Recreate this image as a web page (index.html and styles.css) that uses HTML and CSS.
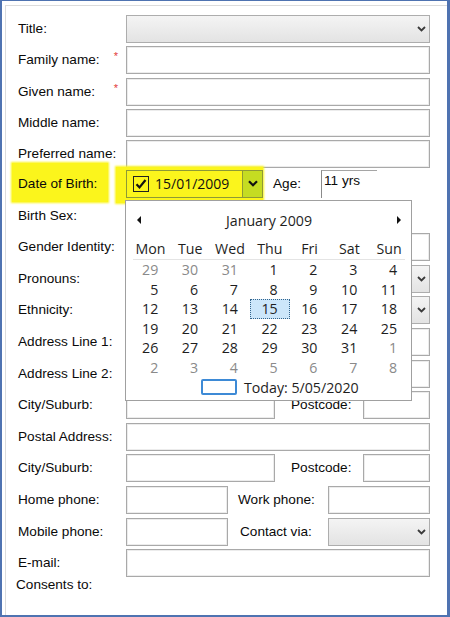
FILE: index.html
```html
<!DOCTYPE html>
<html>
<head>
<meta charset="utf-8">
<link rel="stylesheet" href="styles.css">
</head>
<body>
<div class="frame">
  <div class="panel">
    <div class="grp1">
      <div class="row"><span class="lbl">Title:</span><div class="sel f"><svg class="chev" viewBox="0 0 9 6"><path d="M1 1l3.5 3.5L8 1" fill="none" stroke="#3a3a3a" stroke-width="1.8"/></svg></div></div>
      <div class="row"><span class="lbl">Family name:<i class="req">*</i></span><div class="inp f"></div></div>
      <div class="row"><span class="lbl">Given name:<i class="req">*</i></span><div class="inp f"></div></div>
      <div class="row"><span class="lbl">Middle name:</span><div class="inp f"></div></div>
      <div class="row"><span class="lbl">Preferred name:</span><div class="inp f"></div></div>
    </div>
    <div class="row dob">
      <span class="lbl"><span class="hl">Date of Birth:</span></span>
      <div class="dpwrap">
        <div class="dp">
          <span class="cb"><svg viewBox="0 0 14 14" width="14" height="14"><path d="M2.5 7.2l3 3.2L11.5 3" fill="none" stroke="#111" stroke-width="2.2"/></svg></span>
          <span class="dtext">15/01/2009</span>
          <span class="dbtn"><svg viewBox="0 0 10 7" width="10" height="7"><path d="M1 1.2l4 4 4-4" fill="none" stroke="#111" stroke-width="2.2"/></svg></span>
        </div>
      </div>
      <span class="age-l">Age:</span>
      <div class="age">11 yrs</div>
    </div>
    <div class="grp2">
      <div class="row"><span class="lbl">Birth Sex:</span></div>
      <div class="row"><span class="lbl">Gender Identity:</span><div class="inp f"></div></div>
      <div class="row"><span class="lbl">Pronouns:</span><div class="sel f"><svg class="chev" viewBox="0 0 9 6"><path d="M1 1l3.5 3.5L8 1" fill="none" stroke="#3a3a3a" stroke-width="1.8"/></svg></div></div>
      <div class="row"><span class="lbl">Ethnicity:</span><div class="sel f"><svg class="chev" viewBox="0 0 9 6"><path d="M1 1l3.5 3.5L8 1" fill="none" stroke="#3a3a3a" stroke-width="1.8"/></svg></div></div>
      <div class="row"><span class="lbl">Address Line 1:</span><div class="inp f"></div></div>
      <div class="row"><span class="lbl">Address Line 2:</span><div class="inp f"></div></div>
      <div class="row"><span class="lbl">City/Suburb:</span><div class="inp w149"></div><span class="lbl2 ml16">Postcode:</span><div class="inp w67 push"></div></div>
      <div class="row"><span class="lbl">Postal Address:</span><div class="inp f"></div></div>
      <div class="row"><span class="lbl">City/Suburb:</span><div class="inp w149"></div><span class="lbl2 ml16">Postcode:</span><div class="inp w67 push"></div></div>
      <div class="row"><span class="lbl">Home phone:</span><div class="inp w102"></div><span class="lbl2 ml10">Work phone:</span><div class="inp w102 push"></div></div>
      <div class="row"><span class="lbl">Mobile phone:</span><div class="inp w102"></div><span class="lbl2 ml12">Contact via:</span><div class="sel w102 push"><svg class="chev" viewBox="0 0 9 6"><path d="M1 1l3.5 3.5L8 1" fill="none" stroke="#3a3a3a" stroke-width="1.8"/></svg></div></div>
      <div class="row"><span class="lbl">E-mail:</span><div class="inp f"></div></div>
    </div>
    <div class="consent">Consents to:</div>
  </div>

  <div class="cal">
    <div class="cal-head">
      <svg width="4" height="8" viewBox="0 0 4 8"><path d="M4 0L0 4l4 4z" fill="#111"/></svg>
      <span class="month">January 2009</span>
      <svg width="4" height="8" viewBox="0 0 4 8"><path d="M0 0l4 4-4 4z" fill="#111"/></svg>
    </div>
    <div class="cal-names">
      <span>Mon</span><span>Tue</span><span>Wed</span><span>Thu</span><span>Fri</span><span>Sat</span><span>Sun</span>
    </div>
    <div class="cal-sep"></div>
    <div class="cal-days">
      <span class="o">29</span><span class="o">30</span><span class="o">31</span><span>1</span><span>2</span><span>3</span><span>4</span>
      <span>5</span><span>6</span><span>7</span><span>8</span><span>9</span><span>10</span><span>11</span>
      <span>12</span><span>13</span><span>14</span><span class="selday">15</span><span>16</span><span>17</span><span>18</span>
      <span>19</span><span>20</span><span>21</span><span>22</span><span>23</span><span>24</span><span>25</span>
      <span>26</span><span>27</span><span>28</span><span>29</span><span>30</span><span>31</span><span class="o">1</span>
      <span class="o">2</span><span class="o">3</span><span class="o">4</span><span class="o">5</span><span class="o">6</span><span class="o">7</span><span class="o">8</span>
    </div>
    <div class="cal-today"><span class="tbox"></span><span>Today: 5/05/2020</span></div>
  </div>
</div>
</body>
</html>
```

FILE: styles.css
```css
* { box-sizing: border-box; }
body { margin: 0; background: #fff; }

.frame {
  position: relative;
  width: 450px;
  height: 617px;
  border-style: solid;
  border-color: #4f73b1;
  border-width: 1px 3px 2px 2px;
  font-family: "Liberation Sans", Arial, sans-serif;
  font-size: 13.6px;
  color: #0a0a0a;
  overflow: hidden;
  background: #fff;
}

.panel {
  margin: 4px 0 0 3px;
  border-top: 1px solid #dcdcdc;
  border-left: 1px solid #dcdcdc;
  height: 610px;
  padding: 9px 0 0 12px;
}

.grp1 { display: flex; flex-direction: column; gap: 3.3px; }
.dob { margin-top: 1.8px; }
.grp2 { display: flex; flex-direction: column; gap: 3.6px; margin-top: 3.6px; }

.row {
  display: flex;
  align-items: center;
  height: 28px;
  width: 412px;
}

.lbl {
  flex: none;
  width: 108px;
  line-height: 16px;
  display: flex;
  justify-content: space-between;
  padding-right: 8px;
  white-space: nowrap;
}
.lbl2 { flex: none; line-height: 16px; white-space: nowrap; }
.ml16 { margin-left: 16px; }
.ml10 { margin-left: 10px; }
.ml12 { margin-left: 12px; }

.req {
  color: #e23a3a;
  font-style: normal;
  font-size: 11px;
  position: relative;
  top: -4px;
}

.inp {
  height: 28px;
  border: 1px solid #a9a9a9;
  box-shadow: inset 0 0 0 1px #ececec;
  background: #fff;
}
.sel {
  display: flex;
  align-items: center;
  justify-content: flex-end;
  padding-right: 3px;
  height: 28px;
  border: 1px solid #adadad;
  background: linear-gradient(#f4f4f4, #e3e3e3);
}
.chev { width: 9px; height: 6px; }

.f { flex: 1; }
.w149 { width: 149px; flex: none; }
.w102 { width: 102px; flex: none; }
.w67 { width: 67px; flex: none; }
.push { margin-left: auto; }

/* date of birth row */
.hl {
  background: #fbf51c;
  padding: 13px 11px 10px 6px;
  margin: -13px -11px -10px -6px;
  box-shadow: 0 0 2px 1px #fbf51c;
}
.dpwrap {
  flex: none;
  background: #fbf51c;
  padding: 3px 0 5px 10px;
  margin: -3px 0 -5px -10px;
  box-shadow: 0 0 2px 1px #fbf51c;
}
.dp {
  display: flex;
  align-items: center;
  width: 137px;
  height: 28px;
  border: 1px solid #8e9a35;
}
.cb {
  width: 16px;
  height: 16px;
  border: 1px solid #222;
  margin-left: 6px;
  display: flex;
  align-items: center;
  justify-content: center;
}
.dtext {
  margin-left: 6px;
  font-family: "Open Sans", sans-serif;
  font-size: 14px;
  color: #111;
}
.dbtn {
  margin-left: auto;
  width: 20px;
  height: 100%;
  border-left: 1px solid #8e9a35;
  background: #c5dc22;
  display: flex;
  align-items: center;
  justify-content: center;
}
.age-l { flex: none; width: 48px; margin-left: 10px; line-height: 16px; }
.age {
  flex: none;
  width: 56px;
  height: 28px;
  border-top: 1px solid #a5a5a5;
  border-left: 1px solid #8a8a8a;
  padding: 2px 0 0 2px;
  line-height: 15px;
}

.consent { line-height: 16px; margin-left: -2px; }

/* calendar dropdown */
.cal {
  position: absolute;
  left: 123px;
  top: 199px;
  width: 287px;
  height: 201px;
  border: 1px solid #a0a0a0;
  background: #fff;
  font-family: "Open Sans", sans-serif;
  font-size: 14.2px;
  color: #1e1e1e;
}
.cal-head {
  height: 38px;
  display: flex;
  align-items: center;
  justify-content: space-between;
  padding: 0 10px 0 11px;
}
.cal-names {
  display: grid;
  grid-template-columns: repeat(7, 39.8px);
  margin-left: 4.5px;
  height: 20px;
  line-height: 20px;
  text-align: center;
}
.cal-sep { height: 1px; background: #e4e4e4; margin: 0 6px 0 7px; }
.cal-days {
  display: grid;
  grid-template-columns: repeat(7, 39.8px);
  grid-auto-rows: 19.6px;
  margin-left: 4.5px;
}
.cal-days span {
  text-align: right;
  padding-right: 12px;
  line-height: 19.6px;
}
.cal-days .o { color: #8a8a8a; }
.cal-days .selday {
  background: #cce6fa;
  border: 1px dotted #33648c;
  padding-right: 11px;
  line-height: 17.6px;
}
.cal-today {
  display: flex;
  align-items: center;
  height: 19px;
  padding-left: 75px;
  gap: 7px;
}
.tbox {
  width: 36px;
  height: 16px;
  border: 2px solid #3d8ad6;
  border-radius: 2px;
}
```
